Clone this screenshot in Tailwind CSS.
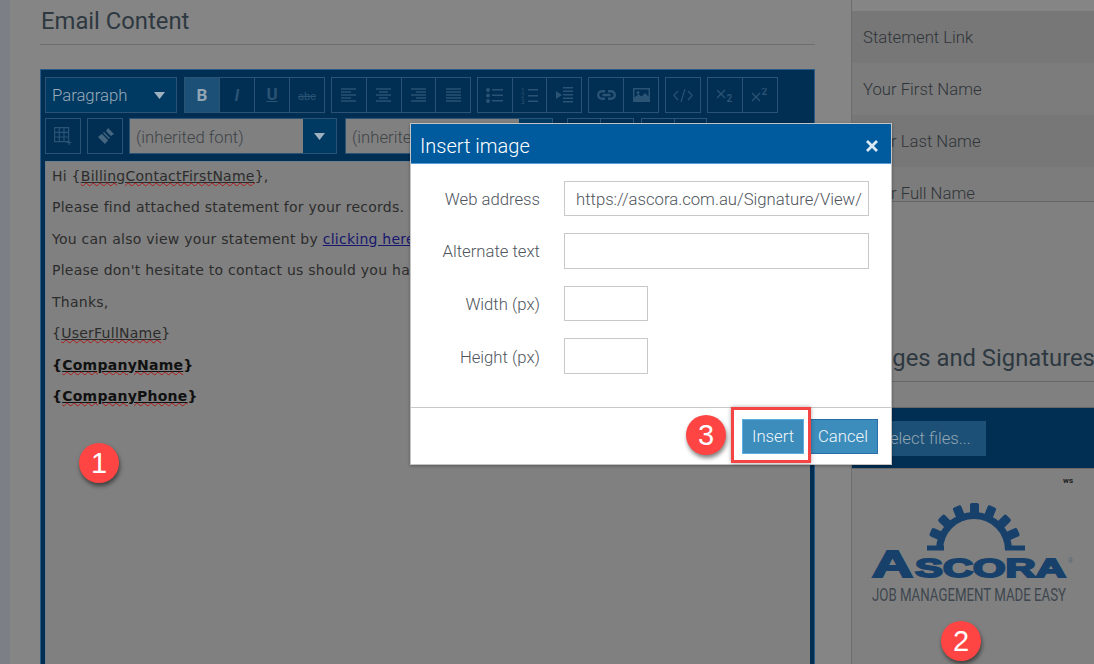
<!DOCTYPE html>
<html>
<head>
<meta charset="utf-8">
<script src="https://cdn.jsdelivr.net/npm/@tailwindcss/browser@4"></script>
</head>
<body class="m-0">
<div class="relative w-[1094px] h-[664px] overflow-hidden flex bg-[#858585] font-['Roboto',sans-serif]">
  <!-- left sliver -->
  <div class="w-[10px] shrink-0 bg-[#7c7f85]"></div>

  <!-- main column -->
  <div class="w-[841px] shrink-0 pl-[30px] pr-[36px] pt-[8px]">
    <h2 class="h-[37px] m-0 border-b border-[#6e6e6e] text-[23.8px] font-normal leading-[26px] text-[#2e3840] pl-px">Email Content</h2>

    <div class="mt-[24px] h-[620px] bg-[#012e53] border border-[#2a5a85] border-b-0 pt-[7px] px-[4px] flex flex-col">
      <!-- toolbar row 1 -->
      <div class="flex h-[36px] shrink-0 text-[#4e6f8a]">
        <div class="w-[132px] border border-[#2b5376] bg-[#003a62] flex items-center justify-between pl-[6px] pr-[11px] text-[16.7px] font-light text-[#9aacba]">
          <span class="pt-[2px]">Paragraph</span>
          <svg width="11" height="7" viewBox="0 0 11 7"><path d="M0 0h11L5.500 7z" fill="#9fb1bf"/></svg>
        </div>
        <div class="ml-[7px] w-[141px] flex border border-[#2b5376]">
          <div class="flex-1 bg-[#1c5076] flex items-center justify-center text-[17px] font-bold text-[#92a6b6] pt-[2px]">B</div>
          <div class="flex-1 border-l border-[#2b5376] flex items-center justify-center text-[17px] italic font-bold text-[#2a5374] pt-[2px]">I</div>
          <div class="flex-1 border-l border-[#2b5376] flex items-center justify-center text-[17px] font-bold underline text-[#2a5374]">U</div>
          <div class="flex-1 border-l border-[#2b5376] flex items-center justify-center text-[11px] line-through text-[#2a5374] pt-[5px]">abc</div>
        </div>
        <div class="ml-[6px] w-[140px] flex border border-[#2b5376]">
          <div class="flex-1 flex items-center justify-center"><svg width="15" height="14" viewBox="0 0 15 14" stroke="#2a5374" stroke-width="1.500"><path d="M0 1h15M0 4h10M0 7h15M0 10h10M0 13h15"/></svg></div>
          <div class="flex-1 border-l border-[#2b5376] flex items-center justify-center"><svg width="15" height="14" viewBox="0 0 15 14" stroke="#2a5374" stroke-width="1.500"><path d="M0 1h15M3 4h9M0 7h15M3 10h9M0 13h15"/></svg></div>
          <div class="flex-1 border-l border-[#2b5376] flex items-center justify-center"><svg width="15" height="14" viewBox="0 0 15 14" stroke="#2a5374" stroke-width="1.500"><path d="M0 1h15M5 4h10M0 7h15M5 10h10M0 13h15"/></svg></div>
          <div class="flex-1 border-l border-[#2b5376] flex items-center justify-center"><svg width="15" height="14" viewBox="0 0 15 14" stroke="#2a5374" stroke-width="1.500"><path d="M0 1h15M0 4h15M0 7h15M0 10h15M0 13h15"/></svg></div>
        </div>
        <div class="ml-[6px] w-[105px] flex border border-[#2b5376]">
          <div class="flex-1 flex items-center justify-center"><svg width="17" height="15" viewBox="0 0 17 15" fill="#2a5374"><circle cx="2" cy="2" r="2"/><circle cx="2" cy="7.500" r="2"/><circle cx="2" cy="13" r="2"/><path d="M6 1h11v1.500H6zM6 6.500h11V8H6zM6 12h11v1.500H6z"/></svg></div>
          <div class="flex-1 border-l border-[#2b5376] flex items-center justify-center"><svg width="17" height="17" viewBox="0 0 17 17" fill="#2a5374"><path d="M7 2h10v1.500H7zM7 8h10v1.500H7zM7 13.500h10V15H7z"/><text x="0" y="5.500" font-size="6.500" font-family="Roboto">1</text><text x="0" y="11" font-size="6.500" font-family="Roboto">2</text><text x="0" y="16.500" font-size="6.500" font-family="Roboto">3</text></svg></div>
          <div class="flex-1 border-l border-[#2b5376] flex items-center justify-center"><svg width="17" height="16" viewBox="0 0 17 16" fill="#2a5374"><path d="M0 4l6 4-6 4zM7 0h10v1.500H7zM7 3.500h10V5H7zM7 7h10v1.500H7zM7 10.500h10V12H7zM7 14h10v1.500H7z"/></svg></div>
        </div>
        <div class="ml-[6px] w-[71px] flex border border-[#2b5376]">
          <div class="flex-1 flex items-center justify-center"><svg width="19" height="10" viewBox="0 0 19 10" fill="none" stroke="#2a5374" stroke-width="2.400"><path d="M8 1.200H5a3.800 3.800 0 0 0 0 7.600h3M11 1.200h3a3.800 3.800 0 0 1 0 7.600h-3M5.500 5h8"/></svg></div>
          <div class="flex-1 border-l border-[#2b5376] flex items-center justify-center"><svg width="17" height="14" viewBox="0 0 17 14" fill="#2a5374"><path fill-rule="evenodd" d="M0 0h17v14H0zM1.500 1.500v8l4-3.500 3 2.500 3.500-3.500 3.500 3.500v-7z"/><circle cx="5" cy="4.500" r="1.500"/></svg></div>
        </div>
        <div class="ml-[6px] w-[36px] flex items-center justify-center border border-[#2b5376]"><svg width="20" height="13" viewBox="0 0 20 13" fill="none" stroke="#2a5374" stroke-width="1.200"><path d="M5 2L.8 6.500 5 11M15 2l4.200 4.500L15 11M12 0L8 13"/></svg></div>
        <div class="ml-[6px] w-[71px] flex border border-[#2b5376]">
          <div class="flex-1 flex items-center justify-center"><svg width="16" height="13" viewBox="0 0 16 13" fill="none" stroke="#2a5374" stroke-width="1.300"><path d="M0 1l8 8M8 1L0 9"/><text x="9.500" y="12.500" font-size="10" font-weight="700" font-family="Roboto" fill="#2a5374" stroke="none">2</text></svg></div>
          <div class="flex-1 border-l border-[#2b5376] flex items-center justify-center"><svg width="16" height="14" viewBox="0 0 16 14" fill="none" stroke="#2a5374" stroke-width="1.300"><path d="M0 5l8 8M8 5l-8 8"/><text x="9.500" y="7" font-size="10" font-weight="700" font-family="Roboto" fill="#2a5374" stroke="none">2</text></svg></div>
        </div>
      </div>
      <!-- toolbar row 2 -->
      <div class="flex h-[36px] shrink-0 mt-[5px]">
        <div class="w-[36px] border border-[#2b5376] flex items-center justify-center"><svg width="18" height="18" viewBox="0 0 18 18" fill="none" stroke="#2a5374" stroke-width="1.200"><path d="M.6.600h14v14H.6zM5.300.600v14M10 .600v14M.6 5.300h14M.6 10h14M15 13v5M12.500 15.500h5"/></svg></div>
        <div class="ml-[6px] w-[36px] border border-[#2b5376] flex items-center justify-center"><svg width="19" height="19" viewBox="0 0 19 19" fill="#44667f"><path d="M12 1l6 6-3 2-5-5zM8 5l6 6-5 6-7-7z"/><path d="M1 1l17 17" stroke="#012e53" stroke-width="1.500"/></svg></div>
        <div class="ml-[6px] w-[208px] flex border border-[#2b5376]">
          <div class="flex-1 bg-[#808080] text-[16.7px] font-light leading-[37px] pl-[6px] text-[#3e4347] whitespace-nowrap overflow-hidden">(inherited font)</div>
          <div class="w-[33px] bg-[#003a62] flex items-center justify-center"><svg width="11" height="7" viewBox="0 0 11 7"><path d="M0 0h11L5.500 7z" fill="#9fb1bf"/></svg></div>
        </div>
        <div class="ml-[8px] w-[208px] flex border border-[#2b5376]">
          <div class="flex-1 bg-[#808080] text-[16.7px] font-light leading-[37px] pl-[6px] text-[#3e4347] whitespace-nowrap overflow-hidden">(inherited size)</div>
          <div class="w-[33px] bg-[#003a62]"></div>
        </div>
        <div class="ml-[14px] w-[67px] flex border border-[#2b5376]"><div class="flex-1"></div><div class="flex-1 border-l border-[#2b5376]"></div></div>
        <div class="ml-[7px] w-[66px] flex border border-[#2b5376]"><div class="flex-1"></div><div class="flex-1 border-l border-[#2b5376]"></div></div>
      </div>
      <!-- editable content -->
      <div class="mt-[7px] flex-1 bg-[#808080] border-l border-t border-[#6d7d8a] pl-[6px] pt-[6.5px] flex flex-col gap-[16.5px] font-['DejaVu_Sans',sans-serif] text-[14px] tracking-[0.25px] leading-[15px] text-[#2c2c2c] whitespace-nowrap overflow-hidden">
        <p>Hi {<span class="underline decoration-[#2c2c2c]"><span class="underline decoration-wavy decoration-[#b01818] decoration-1">BillingContactFirstName</span></span>},</p>
        <p>Please find attached statement for your records.</p>
        <p>You can also view your statement by <span class="underline text-[#17176e]">clicking here</span></p>
        <p>Please don't hesitate to contact us should you have any questions</p>
        <p>Thanks,</p>
        <p>{<span class="underline decoration-[#2c2c2c]"><span class="underline decoration-wavy decoration-[#b01818] decoration-1">UserFullName</span></span>}</p>
        <p class="font-bold text-[#111]">{<span class="underline"><span class="underline decoration-wavy decoration-[#b01818] decoration-1">CompanyName</span></span>}</p>
        <p class="font-bold text-[#111]">{<span class="underline"><span class="underline decoration-wavy decoration-[#b01818] decoration-1">CompanyPhone</span></span>}</p>
      </div>
    </div>
  </div>

  <!-- right panel -->
  <div class="w-[243px] shrink-0 border-l border-[#6e6e6e] flex flex-col">
    <div class="h-[201px] pt-[11px] shrink-0 text-[16.7px] font-light text-[#2f3439]">
      <div class="h-[52px] bg-[#777777] pl-[11px] leading-[54px]">Statement Link</div>
      <div class="h-[52px] bg-[#7c7c7c] pl-[11px] leading-[54px]">Your First Name</div>
      <div class="h-[52px] bg-[#777777] pl-[11px] leading-[54px]">Your Last Name</div>
      <div class="h-[34px] bg-[#7c7c7c] pl-[11px] leading-[54px] overflow-hidden">Your Full Name</div>
    </div>
    <div class="h-[206px] shrink-0 bg-[#808080] border-t border-[#666666] pt-[142px]">
      <div class="h-[38px] border-b border-[#666666] text-[23.8px] leading-[28px] text-[#2e3840] whitespace-nowrap">Images and Signatures</div>
    </div>
    <div class="h-[62px] shrink-0 bg-[#012e53] border-t border-[#666666] border-b border-b-[#6a6a6a] flex items-center pl-[12px]">
      <div class="w-[122px] h-[35px] bg-[#1c5076] text-[16.7px] font-light leading-[35px] pl-[16px] text-[#93a6b4]">Select files...</div>
    </div>
    <div class="flex-1 bg-[#808080]">
      <svg width="242" height="195" viewBox="852 469 242 195" class="block">
        <text x="1063" y="483" font-size="8" font-weight="700" font-family="Roboto" fill="#1c1c1c">ws</text>
        <g fill="#17406b">
          <path d="M943 550a31 31 0 0 1 62 0h7a38 38 0 0 0-76 0z"/>
          <rect x="927" y="545.500" width="17" height="5"/>
          <rect x="1005" y="545.500" width="20" height="5"/>
          <rect x="970" y="503" width="9" height="14" rx="2"/>
          <rect x="970" y="503" width="9" height="14" rx="2" transform="rotate(22 974.500 551)"/>
          <rect x="970" y="503" width="9" height="14" rx="2" transform="rotate(45 974.500 551)"/>
          <rect x="970" y="503" width="9" height="14" rx="2" transform="rotate(66 974.500 551)"/>
          <rect x="970" y="503" width="9" height="14" rx="2" transform="rotate(-22 974.500 551)"/>
          <rect x="970" y="503" width="9" height="14" rx="2" transform="rotate(-45 974.500 551)"/>
          <rect x="970" y="503" width="9" height="14" rx="2" transform="rotate(-66 974.500 551)"/>
          <text x="872" y="577" font-size="37" font-weight="900" font-family="Liberation Sans" textLength="41" lengthAdjust="spacingAndGlyphs" stroke="#17406b" stroke-width="2">A</text>
          <text x="915" y="577" font-size="25" font-weight="900" font-family="Liberation Sans" textLength="151" lengthAdjust="spacingAndGlyphs" stroke="#17406b" stroke-width="1.800">SCORA</text>
        </g>
        <text x="1068" y="563" font-size="7" font-family="Liberation Sans" fill="#4f6477">®</text>
        <text x="872" y="601" font-size="19" font-family="Roboto" fill="#3e474f" textLength="194" lengthAdjust="spacingAndGlyphs">JOB MANAGEMENT MADE EASY</text>
      </svg>
    </div>
  </div>

  <!-- modal dialog -->
  <div class="absolute left-[410px] top-[123px] w-[482px] h-[342px] bg-white border border-[#c4c4c4] flex flex-col shadow-[0_1px_3px_rgba(0,0,0,0.3)]">
    <div class="h-[40px] shrink-0 bg-[#005a9e] border-b border-[#5b9bd5] flex items-center justify-between pl-[9px] pr-[13px] pt-[4px] text-white">
      <span class="text-[20px] font-light">Insert image</span>
      <svg width="12" height="12" viewBox="0 0 12 12" stroke="#dbe9f4" stroke-width="2.800"><path d="M1 1l10 10M11 1L1 11"/></svg>
    </div>
    <div class="h-[243px] shrink-0 pt-[17px] flex flex-col text-[16.7px] font-light text-[#4e555c]">
      <div class="flex items-center h-[35px]">
        <label class="w-[129px] text-right pt-[2px]">Web address</label>
        <div class="ml-[24px] w-[305px] h-[35px] border border-[#c9c9c9] pl-[11px] leading-[35px] whitespace-nowrap overflow-hidden">https://ascora.com.au/Signature/View/</div>
      </div>
      <div class="flex items-center h-[36px] mt-[17px]">
        <label class="w-[129px] text-right pt-[2px]">Alternate text</label>
        <div class="ml-[24px] w-[305px] h-[36px] border border-[#c9c9c9]"></div>
      </div>
      <div class="flex items-center h-[35px] mt-[17px]">
        <label class="w-[129px] text-right pt-[2px]">Width (px)</label>
        <div class="ml-[24px] w-[84px] h-[35px] border border-[#c9c9c9]"></div>
      </div>
      <div class="flex items-center h-[36px] mt-[17px]">
        <label class="w-[129px] text-right pt-[3px]">Height (px)</label>
        <div class="ml-[24px] w-[84px] h-[36px] border border-[#c9c9c9]"></div>
      </div>
    </div>
    <div class="flex-1 border-t border-[#c9c9c9] flex items-start justify-end pt-[11px] pr-[13px] gap-[4px] text-[16.7px] font-light text-[#f2f7fa]">
      <div class="w-[62px] h-[35px] bg-[#3c8dbc] border border-[#5aaee0] flex items-center justify-center">Insert</div>
      <div class="w-[70px] h-[35px] bg-[#3c8dbc] border border-[#2a6da8] flex items-center justify-center">Cancel</div>
    </div>
  </div>

  <!-- annotations -->
  <div class="absolute left-[731px] top-[407px] w-[80px] h-[56px] border-[3px] border-[#f44444] shadow-[0_0_4px_rgba(0,0,0,0.35)]"></div>
  <div class="absolute left-[79px] top-[443px] w-[40px] h-[40px] rounded-full bg-[#ff4444] text-white text-[29px] leading-[40px] text-center font-['Liberation_Sans',sans-serif] shadow-[1px_3px_4px_rgba(0,0,0,0.5)]">1</div>
  <div class="absolute left-[941px] top-[621px] w-[40px] h-[40px] rounded-full bg-[#ff4444] text-white text-[29px] leading-[40px] text-center font-['Liberation_Sans',sans-serif] shadow-[1px_3px_4px_rgba(0,0,0,0.5)]">2</div>
  <div class="absolute left-[686px] top-[415px] w-[40px] h-[40px] rounded-full bg-[#ff4444] text-white text-[29px] leading-[40px] text-center font-['Liberation_Sans',sans-serif] shadow-[1px_3px_4px_rgba(0,0,0,0.5)]">3</div>
</div>
</body>
</html>
